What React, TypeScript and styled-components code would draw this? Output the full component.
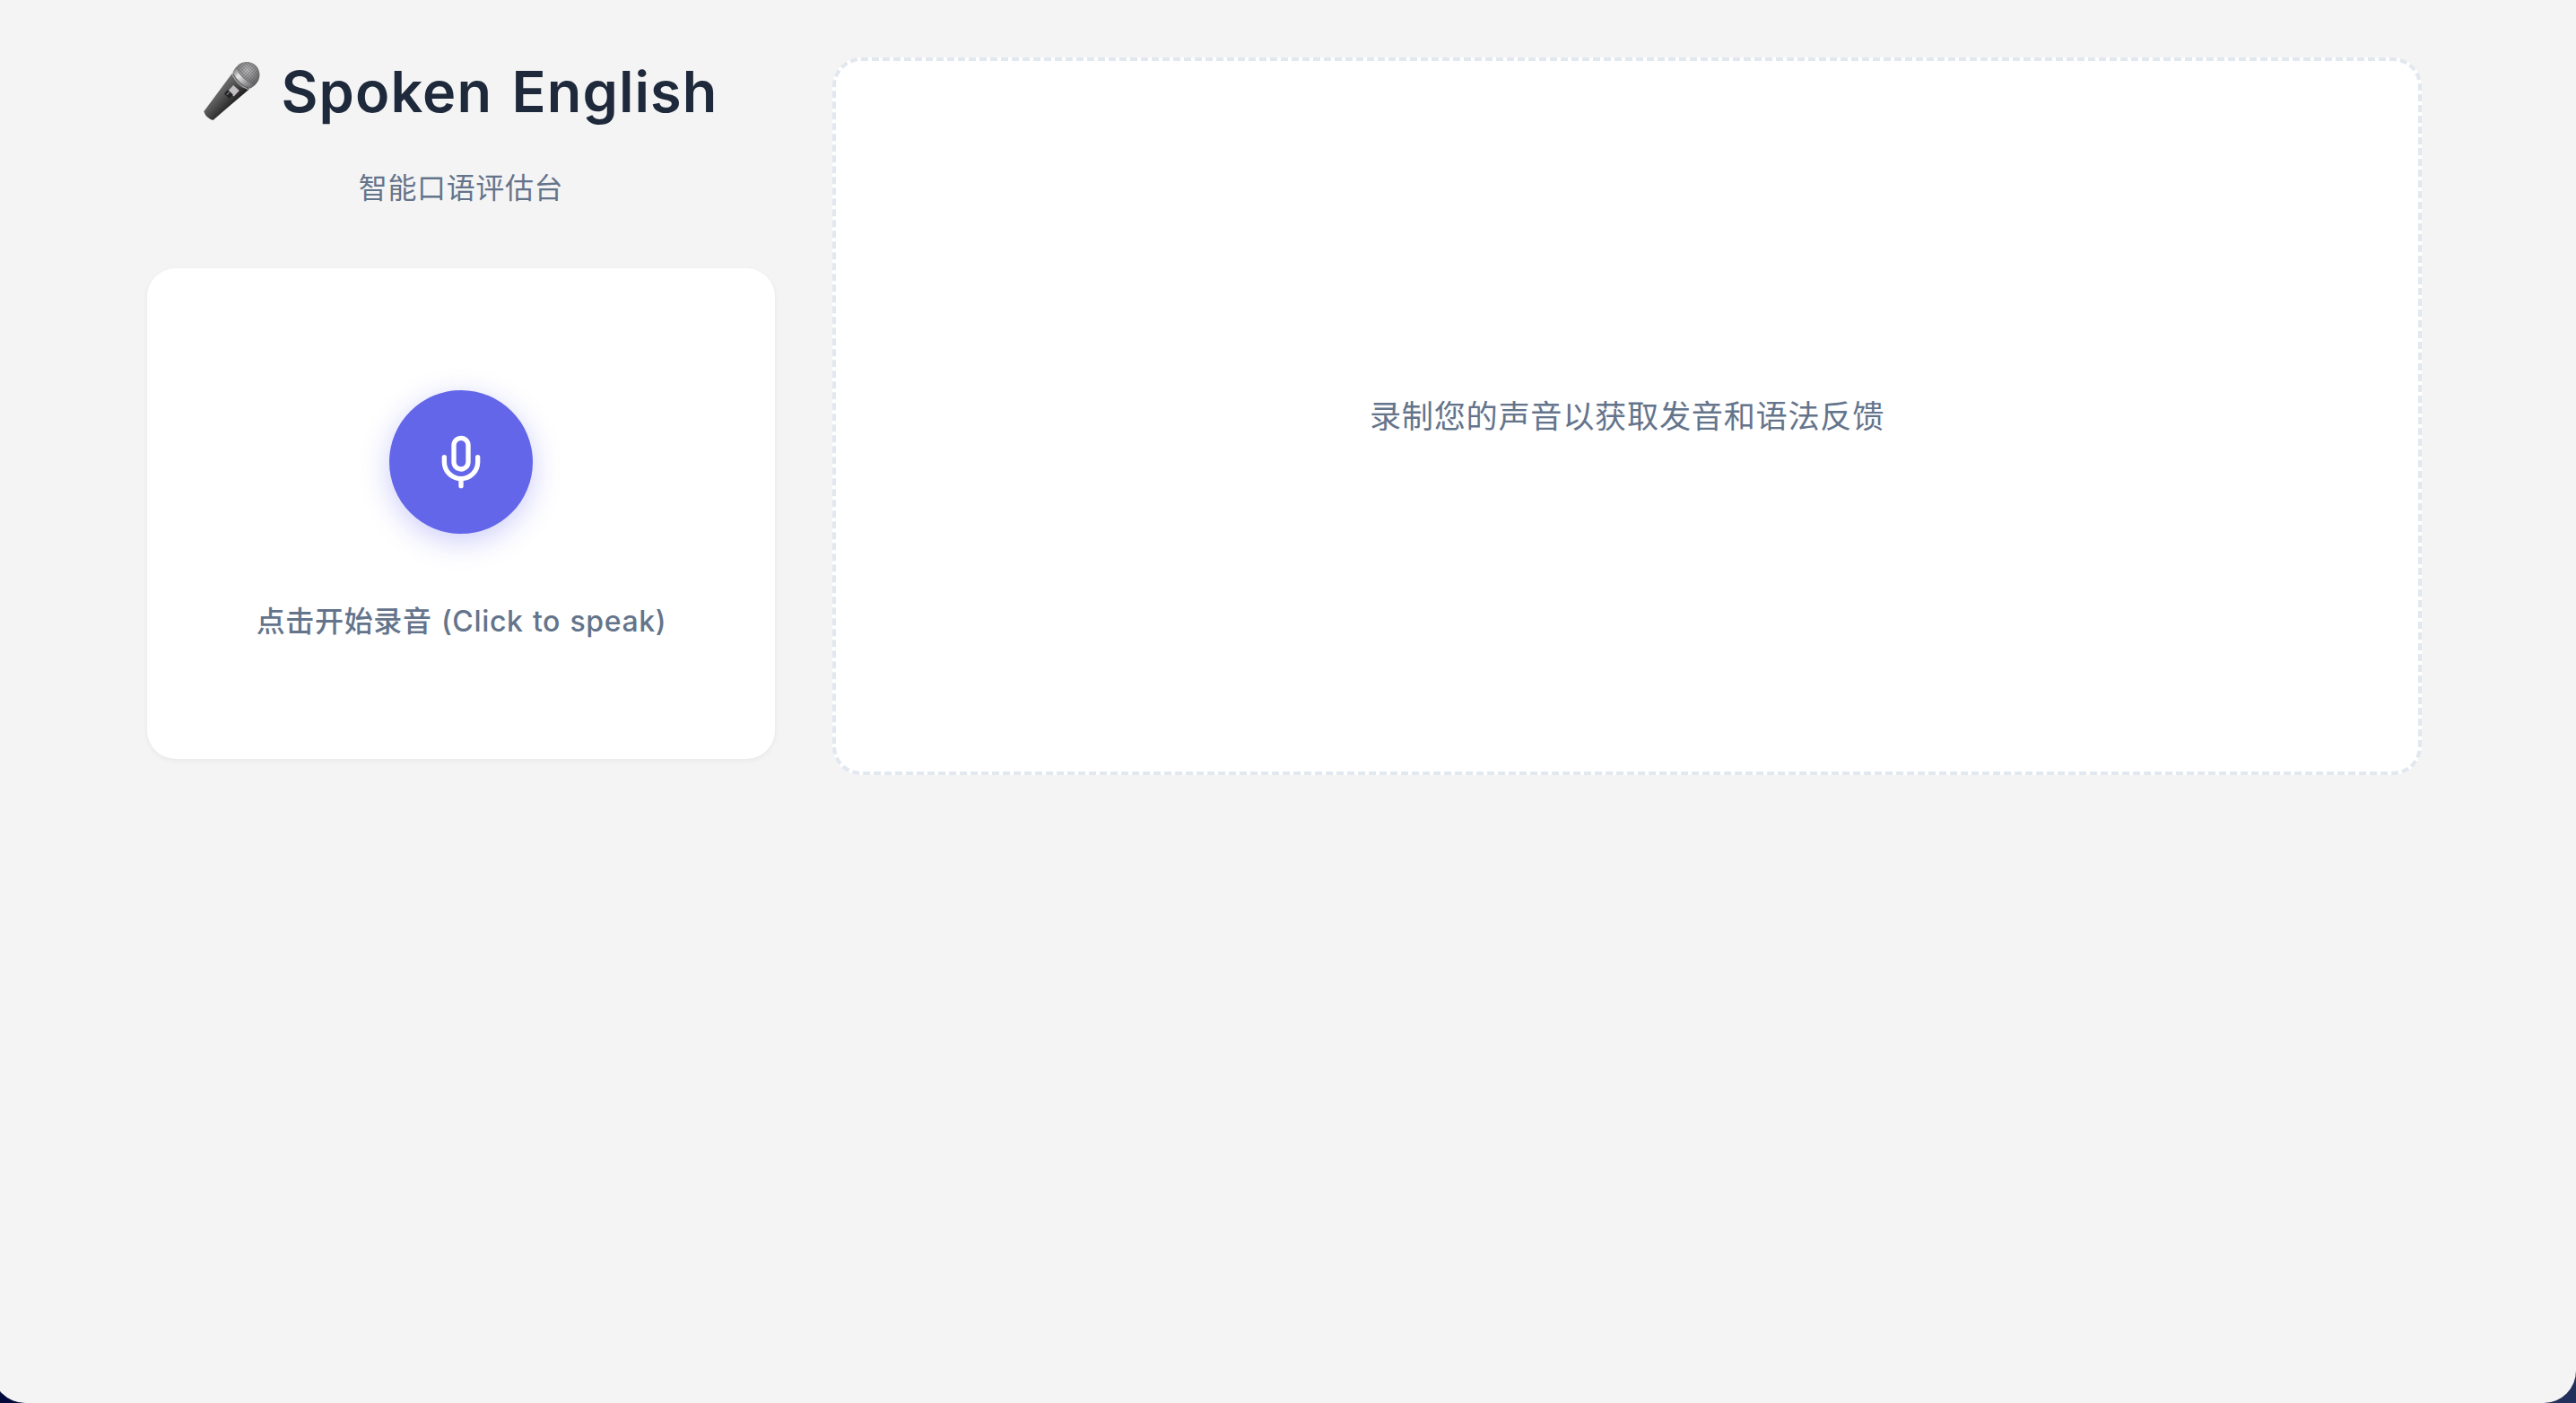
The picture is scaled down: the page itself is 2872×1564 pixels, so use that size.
import React from 'react';
import styled, { createGlobalStyle } from 'styled-components';

const GlobalStyle = createGlobalStyle`
  * { box-sizing: border-box; }
  body {
    margin: 0;
    overflow-x: hidden;
    background: linear-gradient(90deg, #020a3c 0%, #24305c 100%);
    font-family: Inter, "Noto Sans CJK SC", sans-serif;
  }
`;

const Page = styled.div`
  height: 1564px;
  margin-left: -8px;
  background: #f4f4f4;
  border-radius: 0 0 36px 36px;
  padding: 64px 172px 0 172px;
`;

const Layout = styled.main`
  display: grid;
  grid-template-columns: 700px 1772px;
  column-gap: 64px;
  align-items: start;
`;

const Side = styled.section`
  display: flex;
  flex-direction: column;
`;

const Header = styled.header`
  display: flex;
  flex-direction: column;
  align-items: center;
  height: 235px;
`;

const Title = styled.h1`
  display: flex;
  align-items: center;
  gap: 20px;
  margin: 0;
  padding-right: 4px;
  height: 78px;
  font-size: 63px;
  line-height: 74px;
  font-weight: 600;
  letter-spacing: 1.1px;
  word-spacing: 4.5px;
  color: #1e293b;
  white-space: nowrap;
`;

const TitleText = styled.span`
  margin-bottom: 2px;
`;

const Subtitle = styled.p`
  margin: 44px 0 0;
  font-size: 32px;
  line-height: 48px;
  letter-spacing: 0.64px;
  color: #64748b;
`;

const RecordCard = styled.div`
  display: flex;
  flex-direction: column;
  align-items: center;
  height: 547px;
  padding-top: 136px;
  border-radius: 32px;
  background: #fff;
  box-shadow: 0 2px 6px rgba(0, 0, 0, 0.05);
`;

const RecordButton = styled.button`
  display: flex;
  align-items: center;
  justify-content: center;
  width: 160px;
  height: 160px;
  padding: 0;
  border: 0;
  border-radius: 50%;
  background: #6366e8;
  color: #fff;
  box-shadow: 0 8px 32px rgba(99, 102, 241, 0.33);
`;

const Hint = styled.p`
  margin: 74px 0 0;
  padding-left: 1px;
  font-size: 32px;
  line-height: 48px;
  font-weight: 500;
  letter-spacing: 0.64px;
  word-spacing: 1.2px;
  color: #64748b;
  white-space: nowrap;
`;

const Feedback = styled.section`
  display: flex;
  align-items: center;
  justify-content: center;
  height: 800px;
  border: 4px dashed #e2e8f0;
  border-radius: 32px;
  background: #fff;
`;

const Message = styled.p`
  margin: 0;
  font-size: 35.2px;
  line-height: 52px;
  letter-spacing: 0.7px;
  color: #64748b;
`;

const MicrophoneArt = styled.svg`
  display: block;
  flex: none;
  margin-bottom: 3px;
`;

const Microphone = () => (
  <MicrophoneArt width="70" height="68" viewBox="0 0 70 68">
    <defs>
      <linearGradient id="handle" x1="0" y1="0" x2="1" y2="0">
        <stop offset="0" stopColor="#707070" />
        <stop offset="0.35" stopColor="#555" />
        <stop offset="1" stopColor="#1d1d1d" />
      </linearGradient>
      <linearGradient id="collar" x1="0" y1="0" x2="1" y2="0">
        <stop offset="0" stopColor="#777" />
        <stop offset="0.3" stopColor="#e8e8ea" />
        <stop offset="0.65" stopColor="#a0a0a3" />
        <stop offset="1" stopColor="#606062" />
      </linearGradient>
      <radialGradient id="head" cx="0.4" cy="0.35" r="0.7">
        <stop offset="0" stopColor="#c8c8ca" />
        <stop offset="1" stopColor="#555557" />
      </radialGradient>
      <pattern id="mesh" width="2.6" height="2.6" patternUnits="userSpaceOnUse">
        <path d="M0 0H2.6M0 0V2.6" stroke="#333" strokeWidth="1" />
      </pattern>
    </defs>
    <g transform="translate(50 16.5) rotate(43)">
      <path d="M-13 8 L-7 61 Q0 65 7 61 L13 8Z" fill="url(#handle)" />
      <ellipse cx="0" cy="-1" rx="14.5" ry="15" fill="url(#head)" />
      <ellipse cx="0" cy="-1" rx="14.5" ry="15" fill="url(#mesh)" opacity="0.6" />
      <path d="M-14.5 1Q0 7 14.5 1L13.5 7Q0 12-13.5 7Z" fill="url(#collar)" />
      <path d="M-13 9Q0 14 13 9" fill="none" stroke="#aaa" strokeWidth="1.2" />
      <path d="M-3 17H6V26H-3Z" fill="#c4bfc3" />
      <path d="M-4 25H4V31H-4Z" fill="#242424" />
      <path d="M-1 26V30" stroke="#999" strokeWidth="1" />
    </g>
  </MicrophoneArt>
);

const MicIcon = () => (
  <svg width="64" height="64" viewBox="0 0 24 24" fill="none" stroke="currentColor" strokeWidth="2" strokeLinecap="round" strokeLinejoin="round">
    <path d="M12 2a3 3 0 0 0-3 3v7a3 3 0 0 0 6 0V5a3 3 0 0 0-3-3Z" />
    <path d="M19 10v2a7 7 0 0 1-14 0v-2" />
    <path d="M12 19v3" />
  </svg>
);

export default function App() {
  return (
    <>
      <GlobalStyle />
      <Page>
        <Layout>
          <Side>
            <Header>
              <Title>
                <Microphone />
                <TitleText>Spoken English</TitleText>
              </Title>
              <Subtitle>智能口语评估台</Subtitle>
            </Header>
            <RecordCard>
              <RecordButton aria-label="录音">
                <MicIcon />
              </RecordButton>
              <Hint>点击开始录音 (Click to speak)</Hint>
            </RecordCard>
          </Side>
          <Feedback>
            <Message>录制您的声音以获取发音和语法反馈</Message>
          </Feedback>
        </Layout>
      </Page>
    </>
  );
}
